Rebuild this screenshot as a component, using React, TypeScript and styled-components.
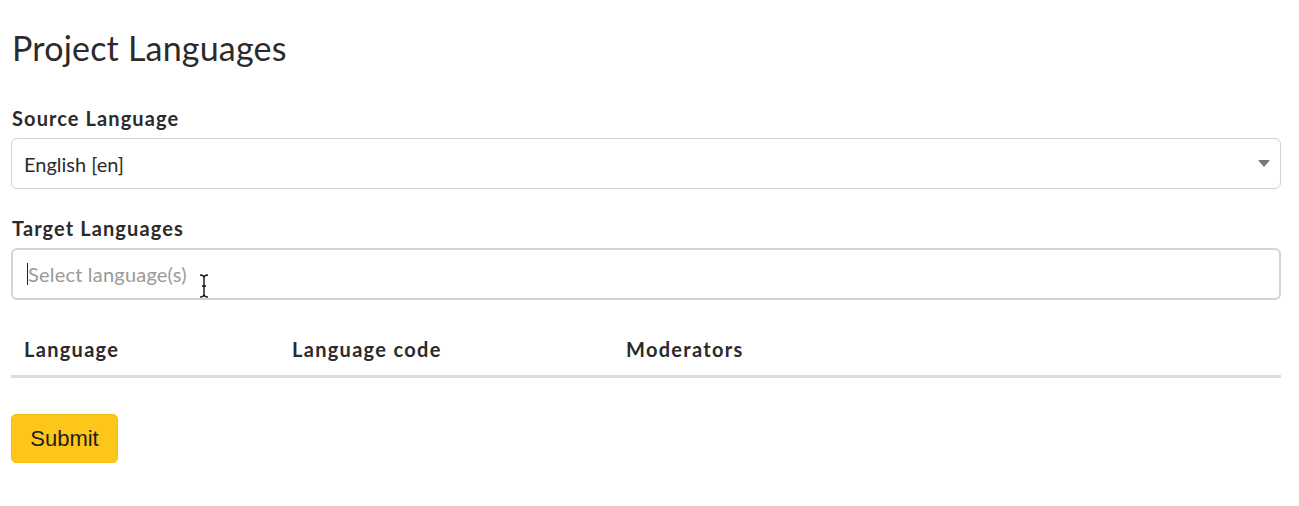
import React from "react";
import styled, { createGlobalStyle } from "styled-components";

const Global = createGlobalStyle`
  html, body { margin: 0; padding: 0; background: #fff; }
  body { font-family: Lato, "Open Sans", sans-serif; color: #333; }
  * { box-sizing: border-box; }
`;

const Page = styled.div`
  padding: 24px 18px 0 11px;
  width: 1299px;
`;

const Title = styled.h1`
  margin: 0 0 0 1px;
  font-size: 34px;
  font-weight: 400;
  letter-spacing: 0.2px;
  color: #2b2b2b;
  line-height: 48px;
`;

const Field = styled.div<{ $top: number }>`
  display: flex;
  flex-direction: column;
  margin-top: ${(p) => p.$top}px;
`;

const Label = styled.label`
  font-size: 20px;
  font-weight: 700;
  color: #2b2b2b;
  letter-spacing: 1.1px;
  margin: 0 0 8px 1px;
  line-height: 24px;
`;

const SelectBox = styled.div`
  position: relative;
  height: 51px;
  border: 1.5px solid #d2d2d2;
  border-radius: 6px;
  display: flex;
  align-items: center;
  padding: 0 12px;
  font-size: 20px;
  color: #2b2b2b;
`;

const Caret = styled.svg`
  position: absolute;
  right: 10px;
  top: 21px;
`;

const InputBox = styled.div`
  position: relative;
  height: 52px;
  border: 2px solid #d4d4d4;
  border-radius: 6px;
  display: flex;
  align-items: center;
  padding: 0 14px;
  font-size: 20px;
  letter-spacing: 0.2px;
  color: #9a9a9a;
`;

const TextCaret = styled.span`
  display: inline-block;
  width: 1px;
  height: 22px;
  background: #222;
`;

const Cursor = styled.svg`
  position: absolute;
  left: 186px;
  top: 24px;
`;

const Table = styled.div`
  margin-top: 26px;
  display: grid;
  grid-template-columns: 268px 334px 1fr;
  border-bottom: 3px solid #dcdcdc;
`;

const Th = styled.div`
  padding: 11px 12px 14px 13px;
  font-size: 20px;
  font-weight: 700;
  letter-spacing: 1.3px;
  color: #2b2b2b;
  line-height: 24px;
`;

const Submit = styled.button`
  margin-top: 36px;
  width: 107px;
  height: 49px;
  background: #ffc61a;
  border: 1px solid #f5bd10;
  border-radius: 5px;
  font-family: "Liberation Sans", Arial, sans-serif;
  font-size: 22px;
  color: #212121;
  padding: 0;
`;

export default function App() {
  return (
    <>
      <Global />
      <Page>
        <Title>Project Languages</Title>
        <Field $top={34}>
          <Label>Source Language</Label>
          <SelectBox>
            English [en]
            <Caret width="12" height="8" viewBox="0 0 12 8">
              <path d="M0 0 H12 L6 7 Z" fill="#777" />
            </Caret>
          </SelectBox>
        </Field>
        <Field $top={27}>
          <Label>Target Languages</Label>
          <InputBox>
            <TextCaret />
            Select language(s)
            <Cursor width="10" height="24" viewBox="0 0 10 24">
              <path
                d="M1 1 Q5 1 5 4 Q5 1 9 1 M5 4 V20 M1 23 Q5 23 5 20 Q5 23 9 23 M3 12 H7"
                stroke="#111"
                strokeWidth="1.4"
                fill="none"
              />
            </Cursor>
          </InputBox>
        </Field>
        <Table>
          <Th>Language</Th>
          <Th>Language code</Th>
          <Th>Moderators</Th>
        </Table>
        <Submit>Submit</Submit>
      </Page>
    </>
  );
}
